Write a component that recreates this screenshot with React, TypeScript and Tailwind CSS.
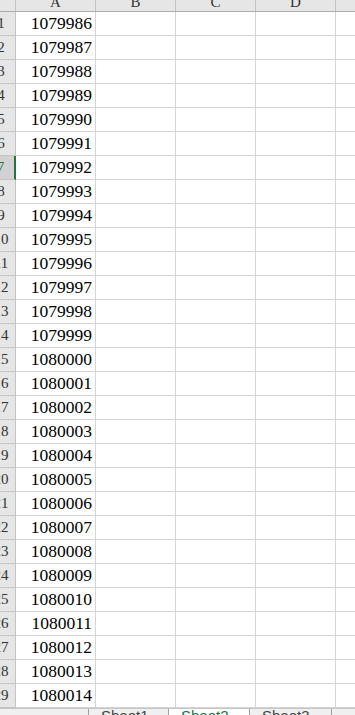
const START = 1079986;
const ROWS = 29;
const COLS = ["A", "B", "C", "D", "E"];
const ACTIVE_ROW = 7;

export default function App() {
  const rows = Array.from({ length: ROWS }, (_, i) => i + 1);

  return (
    <div
      className="relative w-[355px] h-[715px] overflow-hidden bg-white flex flex-col"
      style={{ fontFamily: '"Liberation Serif", "DejaVu Serif", serif' }}
    >
      {/* sheet grid */}
      <div className="-mt-[9px] -ml-[13px] flex-none">
        {/* column header */}
        <div className="flex h-[21px] bg-[#e6e6e6] border-b border-[#ababab]">
          <div className="w-[29px] flex-none border-r border-[#c4c4c4]" />
          {COLS.map((c) => (
            <div
              key={c}
              className="w-[80px] flex-none border-r border-[#c4c4c4] flex items-end justify-center pb-[1px] text-[15px] leading-none text-[#333]"
            >
              {c}
            </div>
          ))}
        </div>

        {/* rows */}
        {rows.map((r) => {
          const active = r === ACTIVE_ROW;
          return (
            <div key={r} className="flex h-[24px]">
              <div
                className={
                  active
                    ? "w-[29px] flex-none bg-[#d2d2d2] border-b border-[#c4c4c4] border-r-2 border-r-[#217346] flex items-center justify-center text-[15px] text-[#217346]"
                    : "w-[29px] flex-none bg-[#e6e6e6] border-b border-[#c4c4c4] border-r border-r-[#c4c4c4] flex items-center justify-center text-[15px] text-[#333]"
                }
              >
                {r}
              </div>
              {COLS.map((c, ci) => (
                <div
                  key={c}
                  className="w-[80px] flex-none border-r border-b border-[#d4d4d4] flex items-center justify-end pr-[3px] text-[17.5px] text-black"
                >
                  {ci === 0 ? START + r - 1 : ""}
                </div>
              ))}
            </div>
          );
        })}
      </div>

      {/* sheet tabs */}
      <div
        className="flex-none h-[20px] flex items-stretch bg-[#f0f0f0] border-t border-[#c6c6c6] text-[15px] leading-[14px] text-[#444]"
        style={{ fontFamily: '"Liberation Sans", Arial, sans-serif' }}
      >
        <div className="w-[88px] flex-none" />
        <div className="w-[80px] flex-none border-l border-[#a0a0a0] pl-[12px]">Sheet1</div>
        <div className="w-[82px] flex-none bg-white border-l border-r border-[#a0a0a0] pl-[12px] text-[#217346]">
          Sheet2
        </div>
        <div className="w-[82px] flex-none border-r border-[#a0a0a0] pl-[12px]">Sheet3</div>
      </div>
    </div>
  );
}
